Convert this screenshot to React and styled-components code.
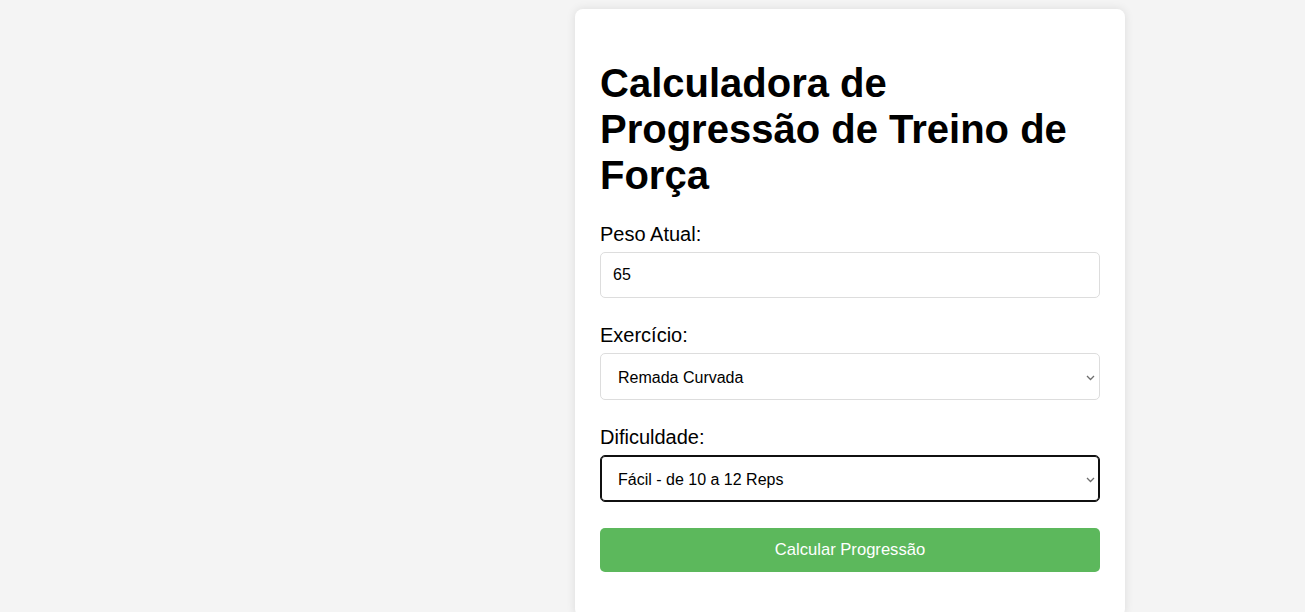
import styled, { createGlobalStyle } from "styled-components";

const GlobalStyle = createGlobalStyle`
  body {
    margin: 0;
    background: #f4f4f4;
    font-family: "Liberation Sans", Arial, sans-serif;
  }
`;

const Page = styled.div`
  display: flex;
  padding: 9px 0 0 575px;
`;

const Card = styled.div`
  width: 550px;
  box-sizing: border-box;
  padding: 25px 25px 45px;
  background: #fff;
  border-radius: 8px;
  box-shadow: 0 0 10px rgba(0, 0, 0, 0.1);
`;

const Title = styled.h1`
  font-size: 40px;
  line-height: 46px;
  margin: 26px 0 25px;
  color: #000;
`;

const Group = styled.div`
  display: flex;
  flex-direction: column;
  margin-bottom: 26px;
`;

const Label = styled.label`
  font-size: 20px;
  line-height: 23px;
  margin-bottom: 6px;
  color: #000;
`;

const fieldBase = `
  width: 100%;
  height: 46px;
  box-sizing: border-box;
  padding: 0 12px;
  font-family: "Liberation Sans", Arial, sans-serif;
  font-size: 16px;
  color: #000;
  background: #fff;
  border-radius: 5px;
  outline: none;
`;

const Input = styled.input`
  ${fieldBase}
  border: 1px solid #ddd;
`;

const SelectWrap = styled.div`
  position: relative;
`;

const Select = styled.select`
  ${fieldBase}
  display: block;
  height: 47px;
  padding: 1px 24px 0 17px;
  appearance: none;
  border: 1px solid ${({ $focused }) => ($focused ? "#101010" : "#ddd")};
  box-shadow: ${({ $focused }) => ($focused ? "inset 0 0 0 1px #101010" : "none")};
`;

const Chevron = styled.svg`
  position: absolute;
  right: 5px;
  top: 50%;
  width: 9px;
  height: 6px;
  margin-top: -2px;
  pointer-events: none;
`;

const Button = styled.button`
  width: 100%;
  height: 44px;
  border: none;
  border-radius: 5px;
  background: #5cb85c;
  color: #fff;
  font-family: "Liberation Sans", Arial, sans-serif;
  font-size: 16.6px;
  padding-top: 1px;
  cursor: pointer;
`;

const Arrow = () => (
  <Chevron viewBox="0 0 9 6">
    <path d="M1 1 L4.5 4.5 L8 1" fill="none" stroke="#6e6e6e" strokeWidth="1.3" />
  </Chevron>
);

export default function App() {
  return (
    <>
      <GlobalStyle />
      <Page>
        <Card>
          <Title>Calculadora de Progressão de Treino de Força</Title>
          <Group>
            <Label htmlFor="peso">Peso Atual:</Label>
            <Input id="peso" type="text" defaultValue="65" />
          </Group>
          <Group>
            <Label htmlFor="exercicio">Exercício:</Label>
            <SelectWrap>
              <Select id="exercicio" defaultValue="remada">
                <option value="supino">Supino</option>
                <option value="remada">Remada Curvada</option>
                <option value="agachamento">Agachamento</option>
              </Select>
              <Arrow />
            </SelectWrap>
          </Group>
          <Group>
            <Label htmlFor="dificuldade">Dificuldade:</Label>
            <SelectWrap>
              <Select id="dificuldade" $focused defaultValue="facil">
                <option value="facil">Fácil - de 10 a 12 Reps</option>
                <option value="medio">Médio - de 8 a 10 Reps</option>
                <option value="dificil">Difícil - de 6 a 8 Reps</option>
              </Select>
              <Arrow />
            </SelectWrap>
          </Group>
          <Button>Calcular Progressão</Button>
        </Card>
      </Page>
    </>
  );
}
